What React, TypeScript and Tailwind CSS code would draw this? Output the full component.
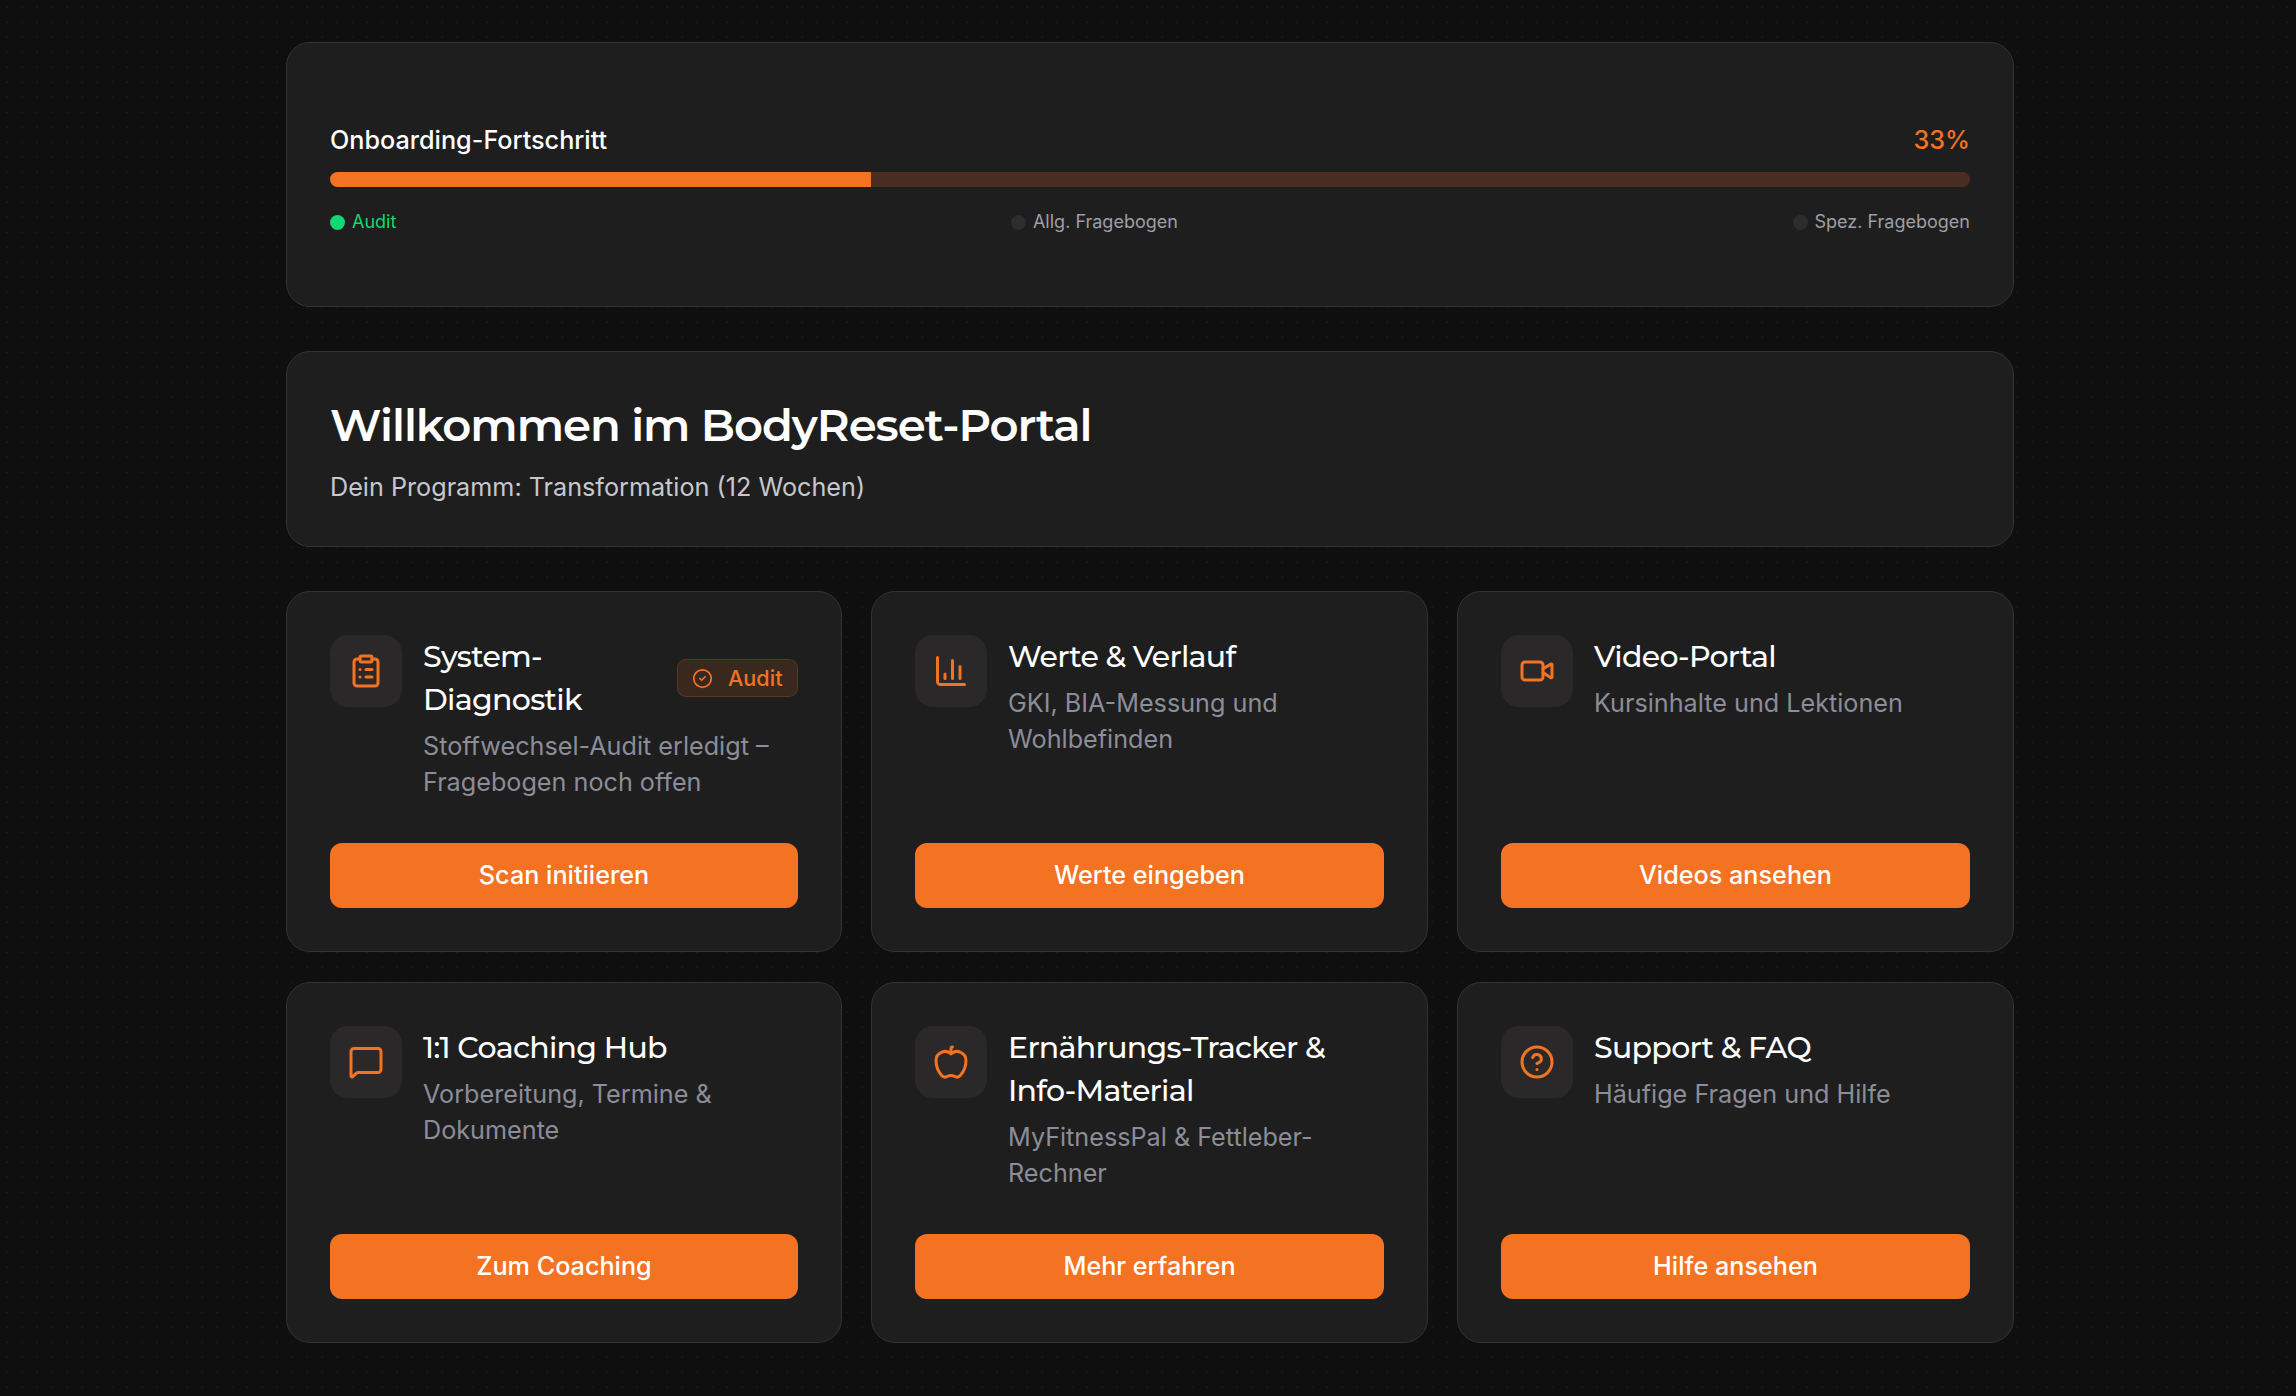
import {
  Apple,
  ChartColumn,
  CircleCheck,
  CircleHelp,
  ClipboardList,
  MessageSquare,
  Video,
} from "lucide-react";
import type { ComponentType } from "react";

const heading = "font-['Montserrat','Inter',sans-serif]";

interface Tile {
  title: string;
  text: string;
  action: string;
  icon: ComponentType<{ size?: number; className?: string }>;
  badge?: string;
}

const tiles: Tile[] = [
  {
    title: "System-Diagnostik",
    text: "Stoffwechsel-Audit erledigt – Fragebogen noch offen",
    action: "Scan initiieren",
    icon: ClipboardList,
    badge: "Audit",
  },
  {
    title: "Werte & Verlauf",
    text: "GKI, BIA-Messung und Wohlbefinden",
    action: "Werte eingeben",
    icon: ChartColumn,
  },
  {
    title: "Video-Portal",
    text: "Kursinhalte und Lektionen",
    action: "Videos ansehen",
    icon: Video,
  },
  {
    title: "1:1 Coaching Hub",
    text: "Vorbereitung, Termine & Dokumente",
    action: "Zum Coaching",
    icon: MessageSquare,
  },
  {
    title: "Ernährungs-Tracker & Info-Material",
    text: "MyFitnessPal & Fettleber-Rechner",
    action: "Mehr erfahren",
    icon: Apple,
  },
  {
    title: "Support & FAQ",
    text: "Häufige Fragen und Hilfe",
    action: "Hilfe ansehen",
    icon: CircleHelp,
  },
];

const steps = [
  { label: "Audit", done: true },
  { label: "Allg. Fragebogen", done: false },
  { label: "Spez. Fragebogen", done: false },
];

function TileCard({ tile }: { tile: Tile }) {
  const Icon = tile.icon;
  return (
    <div className="flex flex-col rounded-[24px] border border-[#333333] bg-[#1e1e1e] p-[43px]">
      <div className="mb-[43px] flex items-start gap-[21px]">
        <div className="flex h-[72px] w-[72px] shrink-0 items-center justify-center rounded-[18px] bg-[#2a2829]">
          <Icon size={36} className="text-[#f47322]" />
        </div>
        <div className="min-w-0 flex-1">
          <div className="flex items-center justify-between gap-[12px]">
            <h3 className={`${heading} text-[30px] leading-[43px] font-medium tracking-[-0.68px] text-white`}>{tile.title}</h3>
            {tile.badge && (
              <span className="flex h-[38px] shrink-0 items-center gap-[15px] rounded-[9px] border border-[#f4732233] bg-[#f473221f] px-[14.5px] text-[21.6px] font-medium text-[#f47322]">
                <CircleCheck size={21} />
                {tile.badge}
              </span>
            )}
          </div>
          <p className="mt-[7px] text-[25.2px] leading-[36px] text-[#8b8d98]">{tile.text}</p>
        </div>
      </div>
      <button className="mt-auto h-[65px] w-full rounded-[12px] bg-[#f47322] text-[25.2px] font-medium text-white">
        {tile.action}
      </button>
    </div>
  );
}

export default function App() {
  return (
    <div className="min-h-[1396px] bg-[#0f0f0f] bg-[radial-gradient(#191919_1px,transparent_1px)] bg-[size:15px_15px] pt-[42px] font-['Inter',sans-serif]">
      <div className="ml-[286px] flex w-[1728px] flex-col">
        <section className="flex h-[265px] flex-col justify-center rounded-[24px] border border-[#333333] bg-[#1e1e1e] px-[43px] pt-[8px]">
          <div className="flex items-center justify-between">
            <span className="text-[25.2px] leading-[35px] font-medium text-white">Onboarding-Fortschritt</span>
            <span className="text-[25.2px] leading-[35px] font-medium text-[#f47322]">33%</span>
          </div>
          <div className="mt-[14px] h-[15px] overflow-hidden rounded-full bg-[#4a2e22]">
            <div className="h-full w-[33%] bg-[#f47322]" />
          </div>
          <div className="mt-[23px] flex justify-between">
            {steps.map((step) => (
              <div key={step.label} className="flex items-center gap-[7px]">
                <span className={`h-[15px] w-[15px] rounded-full ${step.done ? "bg-[#10d873]" : "bg-[#2d2d2f]"}`} />
                <span className={`text-[18px] leading-[24px] ${step.done ? "text-[#10d873]" : "text-[#9d9ea6]"}`}>
                  {step.label}
                </span>
              </div>
            ))}
          </div>
        </section>

        <section className="mt-[44px] h-[196px] rounded-[24px] border border-[#333333] bg-[#1e1e1e] px-[43px] pt-[42.5px]">
          <h1 className={`${heading} text-[45px] leading-[60px] font-semibold tracking-[-1.05px] text-white`}>
            Willkommen im BodyReset-Portal
          </h1>
          <p className="mt-[14px] text-[25.2px] leading-[36px] text-[#c6c8ce]">Dein Programm: Transformation (12 Wochen)</p>
        </section>

        <div className="mt-[44px] grid grid-cols-[556px_557px_557px] gap-x-[29px] gap-y-[30px]">
          {tiles.map((tile) => (
            <TileCard key={tile.title} tile={tile} />
          ))}
        </div>
      </div>
    </div>
  );
}
